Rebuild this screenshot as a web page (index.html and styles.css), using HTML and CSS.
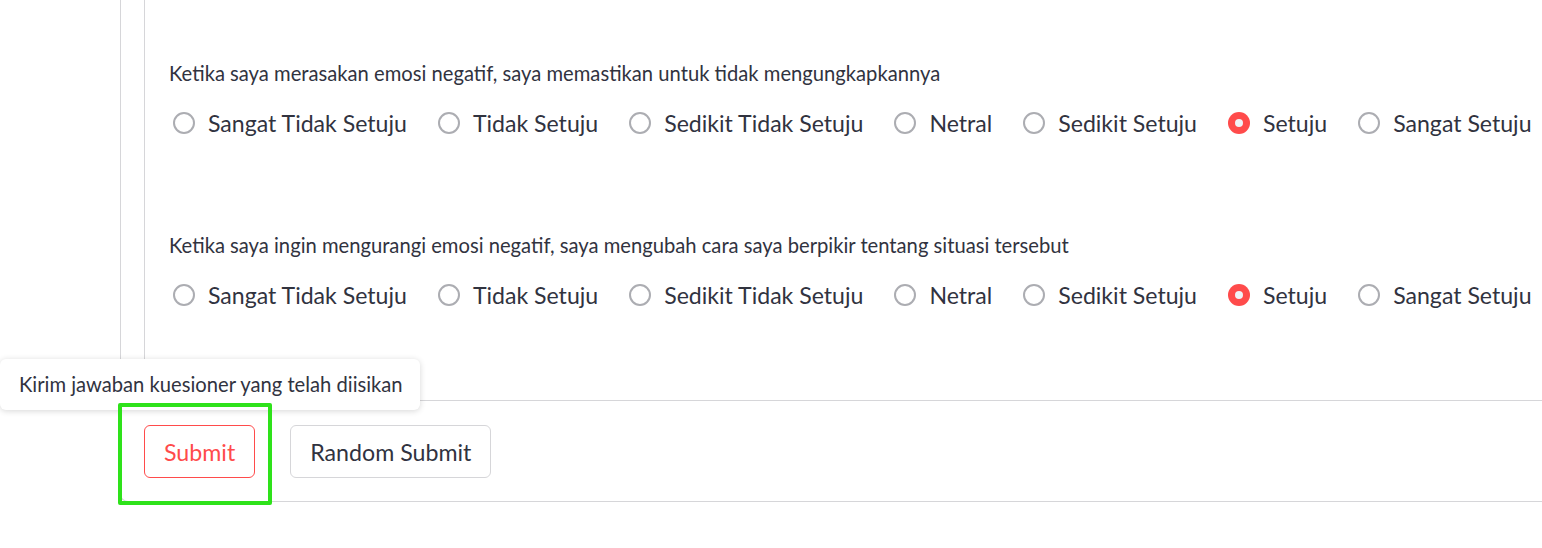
FILE: index.html
```html
<!DOCTYPE html>
<html>
<head>
<meta charset="utf-8">
<link rel="stylesheet" href="styles.css">
</head>
<body>
<div class="page">
  <div class="outer">
    <div class="inner">
      <div class="question">
        <div class="label">Ketika saya merasakan emosi negatif, saya memastikan untuk tidak mengungkapkannya</div>
        <div class="options">
          <div class="opt"><span class="radio"></span><span class="txt">Sangat Tidak Setuju</span></div>
          <div class="opt"><span class="radio"></span><span class="txt">Tidak Setuju</span></div>
          <div class="opt"><span class="radio"></span><span class="txt">Sedikit Tidak Setuju</span></div>
          <div class="opt"><span class="radio"></span><span class="txt">Netral</span></div>
          <div class="opt"><span class="radio"></span><span class="txt">Sedikit Setuju</span></div>
          <div class="opt"><span class="radio checked"></span><span class="txt">Setuju</span></div>
          <div class="opt"><span class="radio"></span><span class="txt">Sangat Setuju</span></div>
        </div>
      </div>
      <div class="question second">
        <div class="label">Ketika saya ingin mengurangi emosi negatif, saya mengubah cara saya berpikir tentang situasi tersebut</div>
        <div class="options">
          <div class="opt"><span class="radio"></span><span class="txt">Sangat Tidak Setuju</span></div>
          <div class="opt"><span class="radio"></span><span class="txt">Tidak Setuju</span></div>
          <div class="opt"><span class="radio"></span><span class="txt">Sedikit Tidak Setuju</span></div>
          <div class="opt"><span class="radio"></span><span class="txt">Netral</span></div>
          <div class="opt"><span class="radio"></span><span class="txt">Sedikit Setuju</span></div>
          <div class="opt"><span class="radio checked"></span><span class="txt">Setuju</span></div>
          <div class="opt"><span class="radio"></span><span class="txt">Sangat Setuju</span></div>
        </div>
      </div>
    </div>
    <div class="footer">
      <button class="btn primary">Submit</button>
      <button class="btn">Random Submit</button>
    </div>
  </div>
  <div class="tooltip">Kirim jawaban kuesioner yang telah diisikan</div>
  <div class="highlight"></div>
</div>
</body>
</html>
```

FILE: styles.css
```css
html, body {
  margin: 0;
  padding: 0;
  background: #ffffff;
}
body {
  font-family: Lato, "Liberation Sans", sans-serif;
  color: #31333f;
  overflow: hidden;
}
.page {
  position: relative;
  width: 1542px;
  height: 548px;
  overflow: hidden;
}
.outer {
  margin-left: 120px;
  width: 1500px;
  border-left: 1px solid #d6d6d9;
  border-bottom: 1px solid #d6d6d9;
  border-bottom-left-radius: 8px;
  display: flex;
  flex-direction: column;
}
.inner {
  box-sizing: border-box;
  margin-left: 23px;
  height: 380px;
  border-left: 1px solid #d6d6d9;
  padding: 61px 0 0 24px;
}
.question.second {
  margin-top: 94px;
}
.label {
  font-size: 20.2px;
  line-height: 25px;
  height: 25px;
  margin-bottom: 21px;
  white-space: nowrap;
}
.options {
  display: flex;
  align-items: center;
  gap: 31px;
  height: 32px;
  margin-left: 4px;
}
.opt {
  display: flex;
  align-items: center;
  gap: 13px;
}
.radio {
  width: 18px;
  height: 18px;
  border: 2px solid #acadb2;
  border-radius: 50%;
  flex: none;
  box-sizing: content-box;
}
.radio.checked {
  width: 22px;
  height: 22px;
  border: none;
  background: #ff4b4b;
  display: flex;
  align-items: center;
  justify-content: center;
}
.radio.checked::after {
  content: "";
  width: 8px;
  height: 8px;
  border-radius: 50%;
  background: #f0f2f6;
}
.txt {
  font-size: 23.1px;
  line-height: 32px;
  white-space: nowrap;
}
.footer {
  margin-top: 20px;
  border-top: 1px solid #d6d6d9;
  padding: 24px 0 23px 23px;
  display: flex;
  gap: 35px;
}
.btn {
  height: 53px;
  padding: 0 19px;
  border: 1px solid #d6d6d9;
  border-radius: 6px;
  background: #ffffff;
  font-family: Lato, "Liberation Sans", sans-serif;
  font-size: 23.2px;
  color: #31333f;
}
.btn.primary {
  border-color: #ff4b4b;
  color: #ff4b4b;
}
.tooltip {
  position: absolute;
  left: 0;
  top: 359px;
  width: 420px;
  height: 51px;
  box-sizing: border-box;
  background: #ffffff;
  border-radius: 6px;
  box-shadow: 0 1px 6px rgba(0, 0, 0, 0.16);
  padding-left: 19px;
  font-size: 20.2px;
  line-height: 51px;
  white-space: nowrap;
}
.highlight {
  position: absolute;
  left: 118px;
  top: 403px;
  width: 154px;
  height: 102px;
  box-sizing: border-box;
  border: 4px solid #2ee21a;
  border-radius: 2px;
}
```
